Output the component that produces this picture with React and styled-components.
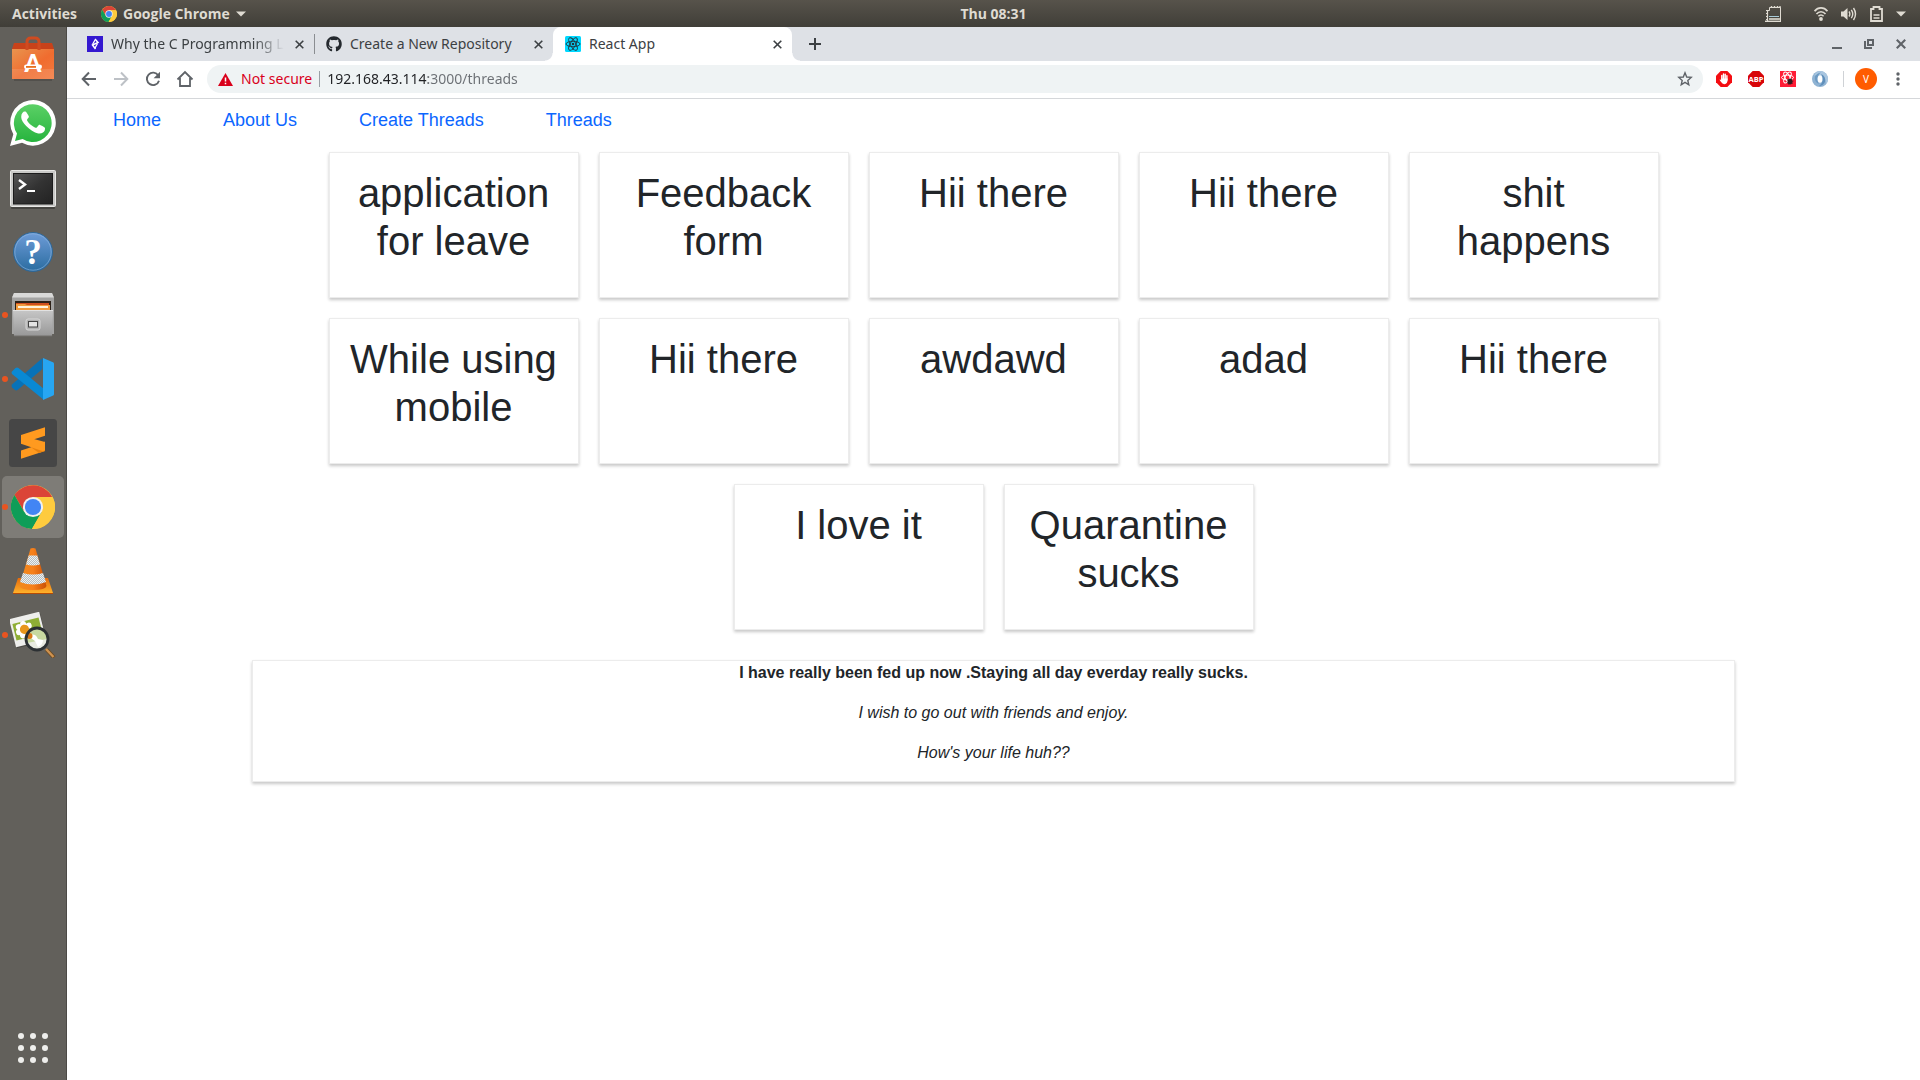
import React from "react";
import styled, { createGlobalStyle } from "styled-components";
import { FaGithub } from "react-icons/fa";

const uiFont = '"Noto Sans", "Open Sans", sans-serif';
const pageFont = '"Liberation Sans", Arial, sans-serif';

const GlobalStyle = createGlobalStyle`
  *, *::before, *::after { box-sizing: border-box; }
  body { margin: 0; background: #fff; }
  button { border: 0; padding: 0; margin: 0; background: none; color: inherit; font: inherit; cursor: pointer; }
  svg { display: block; flex: none; }
`;

/* ---------- desktop shell ---------- */

const Desktop = styled.div`
  display: flex;
  flex-direction: column;
  min-height: 100vh;
  font-family: ${uiFont};
`;

const Workspace = styled.div`
  display: flex;
  flex: 1;
`;

const TopBar = styled.header`
  display: flex;
  align-items: center;
  height: 27px;
  background: linear-gradient(#57534b, #403e38);
  color: #dfdbd2;
  font-family: "Open Sans", sans-serif;
  font-size: 14px;
  font-weight: 700;
  line-height: 20px;
`;

const TopLeft = styled.div`
  display: flex;
  align-items: center;
  flex: 1 1 81px;
  gap: 24px;
  padding-left: 12px;
`;

const TopRight = styled.div`
  display: flex;
  align-items: center;
  justify-content: flex-end;
  flex: 1 1 0;
  gap: 13px;
  padding-right: 14px;
`;

const TopButton = styled.button`
  display: flex;
  align-items: center;
  gap: 6px;
`;

const NotebookButton = styled(TopButton)`
  margin-right: 20px;
`;

const Dock = styled.nav`
  display: flex;
  flex-direction: column;
  align-items: center;
  gap: 2px;
  flex: none;
  width: 67px;
  padding: 1px 0;
  background: #62605b;
  border-right: 1px solid #4c4a46;
`;

const DockItem = styled.button`
  position: relative;
  display: flex;
  align-items: center;
  justify-content: center;
  width: 62px;
  height: 62px;
  border-radius: 5px;
  background: ${(p) => (p.$active ? "#7e7c77" : "transparent")};

  &::before {
    content: "";
    display: ${(p) => (p.$running ? "block" : "none")};
    position: absolute;
    left: 0;
    top: 28px;
    width: 6px;
    height: 6px;
    border-radius: 50%;
    background: #e95420;
  }
`;

const AppsButton = styled(DockItem)`
  margin-top: auto;
`;

/* ---------- browser window ---------- */

const BrowserWindow = styled.div`
  display: flex;
  flex-direction: column;
  flex: 1;
  min-width: 0;
`;

const TabStrip = styled.div`
  display: flex;
  align-items: stretch;
  height: 34px;
  padding-left: 8px;
  background: #dee1e6;
  color: #3c4043;
`;

const Tab = styled.div`
  position: relative;
  display: flex;
  align-items: center;
  width: 239px;
  gap: 8px;
  padding: 0 8px 0 12px;
  border-radius: 8px 8px 0 0;
  background: ${(p) => (p.$active ? "#fff" : "transparent")};

  &::before,
  &::after {
    content: "";
    display: ${(p) => (p.$active ? "block" : "none")};
    position: absolute;
    bottom: 0;
    width: 8px;
    height: 8px;
  }
  &::before {
    left: -8px;
    background: radial-gradient(circle at 0 0, transparent 7px, #fff 8px);
  }
  &::after {
    right: -8px;
    background: radial-gradient(circle at 100% 0, transparent 7px, #fff 8px);
  }
`;

const TabDivider = styled.span`
  align-self: center;
  width: 1px;
  height: 20px;
  margin-right: -1px;
  background: #8a8d91;
`;

const TabTitle = styled.button`
  display: flex;
  align-items: center;
  flex: 1;
  min-width: 0;
  gap: 8px;
  font-size: 14px;
  line-height: 20px;
  text-align: left;
`;

const TabLabel = styled.span`
  flex: 1;
  overflow: hidden;
  white-space: nowrap;
  mask-image: ${(p) =>
    p.$fade ? "linear-gradient(to left, transparent, #000 30px)" : "none"};
`;

const SmallButton = styled.button`
  display: flex;
  align-items: center;
  justify-content: center;
  width: 14px;
  height: 20px;
`;

const NewTab = styled(SmallButton)`
  align-self: center;
  margin-left: 16px;
`;

const WindowControls = styled.div`
  display: flex;
  align-items: center;
  gap: 18px;
  margin-left: auto;
  padding-right: 12px;
  color: #5f6368;
`;

const Toolbar = styled.div`
  display: flex;
  align-items: center;
  height: 38px;
  padding: 0 13px 1px;
  border-bottom: 1px solid #d5d7da;
  color: #5f6368;
`;

const ToolGroup = styled.div`
  display: flex;
  gap: 14px;
`;

const ToolButton = styled.button`
  display: flex;
  align-items: center;
  justify-content: center;
  width: 18px;
  height: 18px;
  color: ${(p) => (p.$dim ? "#bdc1c6" : "inherit")};
`;

const Omnibox = styled.form`
  display: flex;
  align-items: center;
  flex: 1;
  gap: 7px;
  height: 28px;
  margin: 0 12px 0 13px;
  padding: 0 9px 0 11px;
  border-radius: 14px;
  background: #eff3f4;
  font-size: 14px;
  line-height: 20px;
`;

const Security = styled.button`
  display: flex;
  align-items: center;
  gap: 8px;
  color: #d9001b;
`;

const Separator = styled.span`
  width: 1px;
  height: 16px;
  background: ${(p) => p.$color};
`;

const Address = styled.input`
  flex: 1;
  min-width: 0;
  height: 20px;
  border: 0;
  padding: 0;
  outline: 0;
  font: inherit;
  color: transparent;
  background: linear-gradient(to right, #202124 101px, #6b6f74 101px);
  background-clip: text;
`;

const Extensions = styled.div`
  display: flex;
  align-items: center;
  gap: 14px;
`;

const ExtButton = styled.button`
  display: flex;
  width: 18px;
  height: 18px;
  align-items: center;
  justify-content: center;
`;

const Avatar = styled.button`
  width: 22px;
  height: 22px;
  margin-left: -3px;
  border-radius: 50%;
  background: #ff5c00;
  color: #fff;
  font-size: 10px;
  line-height: 22px;
  text-align: center;
`;

const MenuButton = styled(ExtButton)`
  margin-left: -2px;
`;

/* ---------- web page ---------- */

const Page = styled.main`
  flex: 1;
  background: #fff;
  color: #212529;
  font-family: ${pageFont};
  font-size: 16px;
  line-height: 24px;
`;

const SiteNav = styled.nav`
  display: flex;
  gap: 62px;
  padding: 7px 46px 8px;
`;

const NavLink = styled.a`
  color: #0b66ff;
  font-size: 18px;
  line-height: 28px;
  text-decoration: none;
`;

const surface = `
  border: 1px solid #ececec;
  box-shadow: 0 2px 3px rgba(0, 0, 0, 0.22);
`;

const ThreadList = styled.section`
  display: flex;
  flex-wrap: wrap;
  justify-content: center;
  gap: 20px;
  padding: 10px 200px 30px;
`;

const ThreadCard = styled.article`
  width: 250px;
  min-height: 146px;
  padding: 16px;
  text-align: center;
  ${surface}
`;

const ThreadTitle = styled.h1`
  margin: 0;
  font-size: 40px;
  font-weight: 400;
  line-height: 48px;
`;

const ThreadBody = styled.article`
  width: 80%;
  margin: 0 auto;
  text-align: center;
  ${surface}
`;

const Paragraph = styled.p`
  margin: 0 0 16px;
  font-weight: ${(p) => (p.$bold ? 700 : 400)};
  font-style: ${(p) => (p.$italic ? "italic" : "normal")};
`;

/* ---------- icons ---------- */

const ChromeLogo = ({ size }) => (
  <svg width={size} height={size} viewBox="0 0 48 48">
    <circle cx="24" cy="24" r="24" fill="#fecb3e" />
    <path d="M24 13H44.9A24 24 0 0 0 3.8 11L14.5 29.5z" fill="#db4437" />
    <path d="M3.8 11A24 24 0 0 0 22.8 48L33.5 29.5 14.5 29.5z" fill="#0f9d58" />
    <path d="M24 13H45.3A24 24 0 0 1 22.8 48L33.5 29.5z" fill="#fecb3e" />
    <circle cx="24" cy="24" r="11" fill="#f1f1f1" />
    <circle cx="24" cy="24" r="8.8" fill="#4285f4" />
  </svg>
);

const Caret = () => (
  <svg width="10" height="6" viewBox="0 0 10 6">
    <path d="M0 .5h10L5 5.5z" fill="#dfdbd2" />
  </svg>
);

const NotebookIcon = () => (
  <svg width="16" height="16" viewBox="0 0 16 16" fill="none" stroke="#dfdbd2">
    <path d="M15.500 15.500V1.500M4.500 1.500h11M4.500 1.500v3" />
    <path d="M6.500 0v2M9.500 0v2M12.500 0v2M15 0v2" strokeWidth="1.400" />
    <path d="M1 4.500h3.500M1 7.500h2M1 10.500h2M1 13.500h2M2.500 4.500V15" strokeWidth="1.200" />
    <path d="M0 15.300h16" strokeWidth="1.400" />
    <path d="M4 13h11" strokeWidth="1.600" />
    <path d="M4 10.500h10" stroke="#a9cbd8" />
  </svg>
);

const WifiIcon = () => (
  <svg width="14" height="14" viewBox="0 0 14 14" fill="none" stroke="#dfdbd2">
    <path d="M.5 4.200C4-.2 10-.2 13.500 4.200" strokeWidth="1.800" />
    <path d="M2.500 7C5 4 9 4 11.500 7" strokeWidth="1.600" />
    <path d="M4.400 9.200c1.500-1.700 3.700-1.700 5.200 0" strokeWidth="1.500" />
    <circle cx="7" cy="12" r="1.900" fill="#dfdbd2" stroke="none" />
  </svg>
);

const VolumeIcon = () => (
  <svg width="16" height="14" viewBox="0 0 16 14" fill="none" stroke="#dfdbd2">
    <path d="M0 4.500h2.500L6.500 1v12L2.500 9.500H0z" fill="#dfdbd2" stroke="none" />
    <path d="M8 4.500q1.700 2.500 0 5M10.300 2.800q2.900 4.200 0 8.400M12.500 1q4 6 0 12" strokeWidth="1.400" />
  </svg>
);

const BatteryIcon = () => (
  <svg width="13" height="16" viewBox="0 0 13 16" fill="none" stroke="#dfdbd2">
    <path d="M1 3h2.500V1h6v2H12v12H1z" strokeWidth="1.800" />
    <path d="M3.500 9h6M3.500 12h6" strokeWidth="1.600" />
  </svg>
);

const SoftwareIcon = () => (
  <svg width="44" height="46" viewBox="0 0 44 46">
    <defs>
      <linearGradient id="bag" x1="0" y1="0" x2="1" y2="1">
        <stop offset="0" stopColor="#e8944f" />
        <stop offset=".55" stopColor="#f06c2f" />
        <stop offset="1" stopColor="#f37a3f" />
      </linearGradient>
    </defs>
    <path d="M3 7h38l2 6v3H1v-3z" fill="#c8421a" />
    <path d="M1 13h42v30H1z" fill="url(#bag)" />
    <path d="M1 33h42v10H1z" fill="#fff" opacity=".12" />
    <path d="M16 14V6q0-4 4-4h4q4 0 4 4v8" fill="none" stroke="#cf4b20" strokeWidth="3" />
    <path d="M3 44h38" stroke="#44423e" strokeWidth="2" opacity=".5" />
    <text x="22" y="36" textAnchor="middle" fontFamily="Lato, sans-serif" fontWeight="900" fontSize="24" fill="#fff">A</text>
    <rect x="13" y="28.500" width="18" height="4.600" rx="2.300" fill="#fff" />
    <rect x="15" y="30" width="10" height="1.800" fill="#e9701d" />
  </svg>
);

const WhatsAppIcon = () => (
  <svg width="46" height="46" viewBox="0 0 46 46">
    <defs>
      <linearGradient id="wa" x1="0" y1="0" x2="0" y2="1">
        <stop offset="0" stopColor="#5bd066" />
        <stop offset="1" stopColor="#27b43e" />
      </linearGradient>
    </defs>
    <path d="M0 46 3.300 34.300A22.800 22.800 0 1 1 12 42.800z" fill="#fff" />
    <path d="M5 41l2-7.500A18.900 18.900 0 1 1 12.600 39z" fill="url(#wa)" />
    <path d="M16.500 12.500c-.5-1-1.200-1-2-.9-1.200 0-3.300 2-3.300 5.300 0 3 2.200 6 5 9 3.500 3.700 8 6.600 12 7.500 3.500.7 6-1.500 6.500-3 .5-1.700.4-2.600 0-3-.8-.6-4.800-2.700-5.500-2.700-.7 0-1.700 2.500-2.700 3-1 .4-7.500-3-9.500-7.500-.3-1 1.800-2.300 1.900-3.500.1-.6-1.700-3-2.400-4.200z" fill="#fff" />
  </svg>
);

const TerminalIcon = () => (
  <svg width="46" height="46" viewBox="0 -6 46 46">
    <defs>
      <linearGradient id="term" x1="0" y1="0" x2="1" y2="1">
        <stop offset="0" stopColor="#565656" />
        <stop offset=".5" stopColor="#333" />
        <stop offset="1" stopColor="#222" />
      </linearGradient>
    </defs>
    <rect x="1" y="2" width="44" height="37" rx="1" fill="#454440" />
    <rect x=".5" y=".5" width="45" height="36" rx="1" fill="#c9c9c7" stroke="#e8e8e6" />
    <rect x="3.500" y="3.500" width="39" height="30.500" fill="url(#term)" stroke="#1c1c1c" />
    <path d="M9 10l6 4.500L9 19" fill="none" stroke="#fff" strokeWidth="2.400" />
    <path d="M17 21h8" stroke="#fff" strokeWidth="2" />
  </svg>
);

const HelpIcon = () => (
  <svg width="42" height="44" viewBox="0 -2 42 44">
    <defs>
      <linearGradient id="help" x1="0" y1="0" x2="0" y2="1">
        <stop offset="0" stopColor="#6e9cd8" />
        <stop offset="1" stopColor="#2a6ca0" />
      </linearGradient>
    </defs>
    <circle cx="21" cy="21" r="19.500" fill="url(#help)" stroke="#2f6796" />
    <circle cx="21" cy="21" r="18.200" fill="none" stroke="#8fb5e0" opacity=".6" />
    <text x="21" y="33" textAnchor="middle" fontFamily="Liberation Serif, serif" fontWeight="700" fontSize="35" fill="#fff">?</text>
  </svg>
);

const FilesIcon = () => (
  <svg width="44" height="46" viewBox="0 0 44 46">
    <defs>
      <linearGradient id="drawer" x1="0" y1="0" x2="0" y2="1">
        <stop offset="0" stopColor="#c6c6c6" />
        <stop offset="1" stopColor="#989898" />
      </linearGradient>
    </defs>
    <path d="M3 1h38l2 5v36H1V6z" fill="#a3a3a2" />
    <path d="M3 1h38l2 4.500H1z" fill="#d9d9d8" />
    <path d="M4 9h36v11H4z" fill="#2c2118" />
    <path d="M5 11h33v4H5z" fill="#cf4f1e" />
    <path d="M5 12h9l2 1h23v6H5z" fill="#f19a3d" />
    <path d="M7 14h30v2H7z" fill="#fff3dc" />
    <path d="M2 18.500h40L41 44H3z" fill="url(#drawer)" />
    <path d="M2 18.500h40" stroke="#e2e2e2" />
    <path d="M3 44h38" stroke="#716f6b" />
    <rect x="15" y="27" width="14" height="11" rx="2" fill="#b2b2b2" stroke="#d8d8d8" />
    <rect x="17.500" y="29.500" width="9" height="5.500" fill="#e4e4e4" stroke="#444" />
  </svg>
);

const VSCodeIcon = () => (
  <svg width="44" height="44" viewBox="0 0 44 44">
    <path d="M1 27.500 31.500 1v11L6.500 33q-1.400 1-2.800-.2L1 30.300q-1-1.400 0-2.800z" fill="#0872b8" />
    <path d="M1 14.500 4.500 11q1.500-1 3 0L33 32v11L1 17q-1-1.200 0-2.500z" fill="#0989d4" />
    <path d="M32 1l10.500 4.500Q43 6 43 7v30q0 1-.8 1.500L32 43z" fill="#27a6f2" />
  </svg>
);

const SublimeIcon = () => (
  <svg width="48" height="48" viewBox="0 0 48 48">
    <rect width="48" height="48" rx="3.500" fill="#464646" />
    <path d="M36 22.500v9.500L12 39.800v-8.300l10-3.300z" fill="#ff9a1f" />
    <path d="M12 16.500v8.300l22 7.500q2-.6 2-2.500v-5.500l-1-1.500z" fill="#ff9a1f" />
    <path d="M22 28.200l12 4.100 2-1.300v1l-6 2z" fill="#e9820f" />
    <path d="M12 16l24-7.700v8.400L12 24.500z" fill="#ff9a1f" />
  </svg>
);

const VlcIcon = () => (
  <svg width="42" height="48" viewBox="0 0 42 48">
    <defs>
      <linearGradient id="cone" x1="0" y1="0" x2="1" y2="0">
        <stop offset="0" stopColor="#f18a1d" />
        <stop offset=".5" stopColor="#f7801a" />
        <stop offset="1" stopColor="#c94f05" />
      </linearGradient>
      <linearGradient id="base" x1="0" y1="0" x2="0" y2="1">
        <stop offset="0" stopColor="#e56a0c" />
        <stop offset="1" stopColor="#ffb12a" />
      </linearGradient>
      <pattern id="mesh" width="2" height="2" patternUnits="userSpaceOnUse">
        <rect width="2" height="2" fill="#edf1f2" />
        <path d="M0 0h1v1H0zM1 1h1v1H1z" fill="#b7bdc0" />
      </pattern>
    </defs>
    <path d="M6 31h30l5 15H1z" fill="url(#base)" />
    <path d="M1 46.500h40" stroke="#b54a05" />
    <path d="M18.500 1.500q2.500-1 5 0L34.500 39q-1 4-13.500 4T7.500 39z" fill="url(#cone)" />
    <path d="M16.700 8.500h8.600l2.700 9q-7 2-14 0z" fill="url(#mesh)" />
    <path d="M11 26q10 3 20 0l3 9q-13 5-26 0z" fill="url(#mesh)" />
  </svg>
);

const ViewerIcon = () => (
  <svg width="46" height="46" viewBox="0 0 46 46">
    <g transform="rotate(-14 18 19)">
      <rect x="3" y="4" width="31" height="29" fill="#33322e" opacity=".5" />
      <rect x="2.500" y="3" width="31" height="29" fill="#eeeeec" />
      <rect x="4.500" y="8.500" width="27" height="17" fill="#8fae35" />
      <g fill="#fff">
        <circle cx="15" cy="11" r="3" /><circle cx="20" cy="14" r="3" />
        <circle cx="10" cy="13" r="3" /><circle cx="9" cy="18" r="3" />
        <circle cx="12" cy="22" r="3" /><circle cx="18" cy="22" r="3" />
      </g>
      <circle cx="15" cy="16.500" r="4.600" fill="#e8961b" />
    </g>
    <circle cx="27" cy="27" r="10.500" fill="#c7d8a0" />
    <path d="M17 31q10-2 20-4 0 8-8 10-8 1-12-6z" fill="#e9ebe2" />
    <path d="M18 24q7-4 10 3l5 1q0 5-5 7l-3-6z" fill="#fff" />
    <circle cx="19.500" cy="24" r="3" fill="#d97a18" />
    <circle cx="27" cy="27" r="11" fill="none" stroke="#2c3033" strokeWidth="2.800" />
    <path d="M36.500 37.500l7.500 8" stroke="#6b4a24" strokeWidth="4" />
    <path d="M36 37l7.500 8" stroke="#cf9350" strokeWidth="2.400" />
  </svg>
);

const AppsIcon = () => (
  <svg width="30" height="30" viewBox="0 0 30 30" fill="#eeeeec">
    {[3, 15, 27].map((y) => [3, 15, 27].map((x) => <circle key={`${x}-${y}`} cx={x} cy={y} r="3" />))}
  </svg>
);

const ArticleFavicon = () => (
  <svg width="16" height="16" viewBox="0 0 16 16">
    <rect width="16" height="16" fill="#3418d0" />
    <path d="M8 3 11 6.500 5.500 9 8.500 13" fill="none" stroke="#fff" strokeWidth="1.500" />
    <path d="M8 4 5.500 8.500M10.500 7.500 8 12" stroke="#fff" strokeWidth="1.300" />
  </svg>
);

const ReactFavicon = () => (
  <svg width="16" height="16" viewBox="0 0 16 16">
    <rect width="16" height="16" rx="1.500" fill="#00d8ff" />
    <g fill="none" stroke="#20323a" strokeWidth=".9">
      <ellipse cx="8" cy="8" rx="7" ry="2.700" />
      <ellipse cx="8" cy="8" rx="7" ry="2.700" transform="rotate(60 8 8)" />
      <ellipse cx="8" cy="8" rx="7" ry="2.700" transform="rotate(120 8 8)" />
    </g>
    <circle cx="8" cy="8" r="1.300" fill="#20323a" />
  </svg>
);

const CrossIcon = ({ size = 9, weight = 1.6 }) => (
  <svg width={size} height={size} viewBox="0 0 9 9">
    <path d="M.7.7l7.600 7.600M8.300.7.7 8.300" stroke="currentColor" strokeWidth={weight} />
  </svg>
);

const PlusIcon = () => (
  <svg width="12" height="12" viewBox="0 0 12 12">
    <path d="M6 0v12M0 6h12" stroke="currentColor" strokeWidth="2" />
  </svg>
);

const MinimizeIcon = () => (
  <svg width="10" height="10" viewBox="0 0 10 10">
    <path d="M0 9h10" stroke="currentColor" strokeWidth="2" />
  </svg>
);

const RestoreIcon = () => (
  <svg width="10" height="10" viewBox="0 0 10 10" fill="none" stroke="currentColor" strokeWidth="2">
    <path d="M4 1h5v5H4z" />
    <path d="M1 2v7h7" />
  </svg>
);

const BackIcon = () => (
  <svg width="16" height="16" viewBox="0 0 16 16" fill="none" stroke="currentColor" strokeWidth="2">
    <path d="M15 8H2M8 1.500 1.700 8 8 14.500" />
  </svg>
);

const ForwardIcon = () => (
  <svg width="16" height="16" viewBox="0 0 16 16" fill="none" stroke="currentColor" strokeWidth="2">
    <path d="M1 8h13M8 1.500 14.300 8 8 14.500" />
  </svg>
);

const ReloadIcon = () => (
  <svg width="16" height="16" viewBox="0 0 16 16">
    <path d="M13.300 4.500A6.200 6.200 0 1 0 14 9.700" fill="none" stroke="currentColor" strokeWidth="1.900" />
    <path d="M15 .8v6.400H8.600z" fill="currentColor" />
  </svg>
);

const HomeIcon = () => (
  <svg width="18" height="18" viewBox="0 0 18 18">
    <path d="M1.500 9.500 9 2l7.500 7.500M4 8v8h10V8" fill="none" stroke="currentColor" strokeWidth="1.800" />
  </svg>
);

const WarningIcon = () => (
  <svg width="15" height="13" viewBox="0 0 15 13">
    <path d="M7.500 0 15 13H0z" fill="#d9001b" />
    <path d="M7.500 4.500v4M7.500 9.700v1.600" stroke="#fff" strokeWidth="1.500" />
  </svg>
);

const StarIcon = () => (
  <svg width="16" height="16" viewBox="0 0 16 16">
    <path d="M8 1.800 9.700 6l4.500.4-3.400 3 1 4.400L8 11.400l-3.800 2.400 1-4.400-3.400-3L6.300 6z" fill="none" stroke="currentColor" strokeWidth="1.400" />
  </svg>
);

const octagon = "M4.700 0h6.600L16 4.700v6.600L11.300 16H4.700L0 11.300V4.700z";

const AdblockIcon = () => (
  <svg width="16" height="16" viewBox="0 0 16 16">
    <path d={octagon} fill="#f40d12" />
    <path d="M5.800 8V4.500M7.500 8V3M9.200 8V3.200M10.900 9V4.800" stroke="#fff" strokeWidth="1.400" strokeLinecap="round" />
    <path d="M5.100 7.500h6.500q.3 5.700-3.300 5.700-2 0-3.400-2.400L3.500 8.800q.8-.8 1.600.3z" fill="#fff" />
  </svg>
);

const AbpIcon = () => (
  <svg width="16" height="16" viewBox="0 0 16 16">
    <path d={octagon} fill="#d80509" />
    <text x="8" y="10.800" textAnchor="middle" fontFamily="Open Sans, sans-serif" fontWeight="700" fontSize="7.500" fill="#fff">ABP</text>
  </svg>
);

const ReactBugIcon = () => (
  <svg width="16" height="16" viewBox="0 0 16 16">
    <rect width="16" height="16" fill="#ff1d36" />
    <g fill="none" stroke="#fff" strokeWidth="1">
      <ellipse cx="7.500" cy="6.500" rx="6" ry="2.400" />
      <ellipse cx="7.500" cy="6.500" rx="6" ry="2.400" transform="rotate(60 7.500 6.500)" />
      <ellipse cx="7.500" cy="6.500" rx="6" ry="2.400" transform="rotate(120 7.500 6.500)" />
    </g>
    <ellipse cx="10" cy="10.500" rx="2.400" ry="3" fill="#33191c" />
    <path d="M7 8.500l6 4M7 12l6.500-2M8.500 13.500l3-6" stroke="#33191c" strokeWidth=".7" />
  </svg>
);

const SwirlIcon = () => (
  <svg width="16" height="16" viewBox="0 0 16 16">
    <circle cx="8" cy="8" r="8" fill="#8fb3d3" />
    <path d="M8 0a8 8 0 0 1 6 13.200Q15 6 8 4 4 3 2 5 4 0 8 0z" fill="#a9c6e0" />
    <path d="M9 3q5 2 4 8-2 4-6 4 4-3 3.500-7Q10.500 4.500 9 3z" fill="#5f8fbb" />
    <path d="M7 13Q2 11 3 5.500 5 2 9 1.500 5.500 4 5.500 8q0 3 1.500 5z" fill="#6d9bc4" />
    <ellipse cx="8" cy="8" rx="2.400" ry="3.800" fill="#fff" />
  </svg>
);

const DotsIcon = () => (
  <svg width="4" height="14" viewBox="0 0 4 14" fill="#5f6368">
    <circle cx="2" cy="2" r="1.700" />
    <circle cx="2" cy="7" r="1.700" />
    <circle cx="2" cy="12" r="1.700" />
  </svg>
);

/* ---------- data ---------- */

const dockApps = [
  { name: "Ubuntu Software", Icon: SoftwareIcon },
  { name: "WhatsApp", Icon: WhatsAppIcon },
  { name: "Terminal", Icon: TerminalIcon },
  { name: "Help", Icon: HelpIcon },
  { name: "Files", Icon: FilesIcon, running: true },
  { name: "Visual Studio Code", Icon: VSCodeIcon, running: true },
  { name: "Sublime Text", Icon: SublimeIcon },
  { name: "Google Chrome", Icon: () => <ChromeLogo size={44} />, running: true, active: true },
  { name: "VLC media player", Icon: VlcIcon },
  { name: "Image Viewer", Icon: ViewerIcon, running: true },
];

const tabs = [
  { title: "Why the C Programming L", icon: <ArticleFavicon />, fade: true, divider: true },
  { title: "Create a New Repository", icon: <FaGithub size={16} color="#24292e" /> },
  { title: "React App", icon: <ReactFavicon />, active: true },
];

const links = ["Home", "About Us", "Create Threads", "Threads"];

const threads = [
  "application for leave",
  "Feedback form",
  "Hii there",
  "Hii there",
  "shit happens",
  "While using mobile",
  "Hii there",
  "awdawd",
  "adad",
  "Hii there",
  "I love it",
  "Quarantine sucks",
];

const extensions = [
  { name: "AdBlock", Icon: AdblockIcon },
  { name: "Adblock Plus", Icon: AbpIcon },
  { name: "React Developer Tools", Icon: ReactBugIcon },
  { name: "Sync", Icon: SwirlIcon },
];

export default function App() {
  return (
    <Desktop>
      <GlobalStyle />
      <TopBar>
        <TopLeft>
          <TopButton>Activities</TopButton>
          <TopButton>
            <ChromeLogo size={16} />
            Google Chrome
            <Caret />
          </TopButton>
        </TopLeft>
        <TopButton>Thu 08:31</TopButton>
        <TopRight>
          <NotebookButton aria-label="Notes"><NotebookIcon /></NotebookButton>
          <TopButton aria-label="Network"><WifiIcon /></TopButton>
          <TopButton aria-label="Volume"><VolumeIcon /></TopButton>
          <TopButton aria-label="Battery"><BatteryIcon /></TopButton>
          <TopButton aria-label="System menu"><Caret /></TopButton>
        </TopRight>
      </TopBar>
      <Workspace>
        <Dock aria-label="Dock">
          {dockApps.map(({ name, Icon, running, active }) => (
            <DockItem key={name} aria-label={name} $running={running} $active={active}>
              <Icon />
            </DockItem>
          ))}
          <AppsButton aria-label="Show applications"><AppsIcon /></AppsButton>
        </Dock>
        <BrowserWindow>
          <TabStrip>
            {tabs.map((tab) => (
              <React.Fragment key={tab.title}>
                <Tab $active={tab.active}>
                  <TabTitle>
                    {tab.icon}
                    <TabLabel $fade={tab.fade}>{tab.title}</TabLabel>
                  </TabTitle>
                  <SmallButton aria-label="Close tab"><CrossIcon /></SmallButton>
                </Tab>
                {tab.divider && <TabDivider />}
              </React.Fragment>
            ))}
            <NewTab aria-label="New tab"><PlusIcon /></NewTab>
            <WindowControls>
              <SmallButton aria-label="Minimize"><MinimizeIcon /></SmallButton>
              <SmallButton aria-label="Restore"><RestoreIcon /></SmallButton>
              <SmallButton aria-label="Close"><CrossIcon size={10} weight={1.9} /></SmallButton>
            </WindowControls>
          </TabStrip>
          <Toolbar>
            <ToolGroup>
              <ToolButton aria-label="Back"><BackIcon /></ToolButton>
              <ToolButton aria-label="Forward" $dim><ForwardIcon /></ToolButton>
              <ToolButton aria-label="Reload"><ReloadIcon /></ToolButton>
              <ToolButton aria-label="Home page"><HomeIcon /></ToolButton>
            </ToolGroup>
            <Omnibox onSubmit={(e) => e.preventDefault()}>
              <Security type="button">
                <WarningIcon />
                Not secure
              </Security>
              <Separator $color="#9aa0a6" />
              <Address aria-label="Address" defaultValue="192.168.43.114:3000/threads" />
              <ToolButton type="button" aria-label="Bookmark"><StarIcon /></ToolButton>
            </Omnibox>
            <Extensions>
              {extensions.map(({ name, Icon }) => (
                <ExtButton key={name} aria-label={name}><Icon /></ExtButton>
              ))}
              <Separator $color="#cfd2d6" />
              <Avatar>V</Avatar>
              <MenuButton aria-label="Menu"><DotsIcon /></MenuButton>
            </Extensions>
          </Toolbar>
          <Page>
            <SiteNav>
              {links.map((label) => (
                <NavLink key={label} href="#">{label}</NavLink>
              ))}
            </SiteNav>
            <ThreadList>
              {threads.map((title, i) => (
                <ThreadCard key={i}>
                  <ThreadTitle>{title}</ThreadTitle>
                </ThreadCard>
              ))}
            </ThreadList>
            <ThreadBody>
              <Paragraph $bold>I have really been fed up now .Staying all day everday really sucks.</Paragraph>
              <Paragraph $italic>I wish to go out with friends and enjoy.</Paragraph>
              <Paragraph $italic>How's your life huh??</Paragraph>
            </ThreadBody>
          </Page>
        </BrowserWindow>
      </Workspace>
    </Desktop>
  );
}
